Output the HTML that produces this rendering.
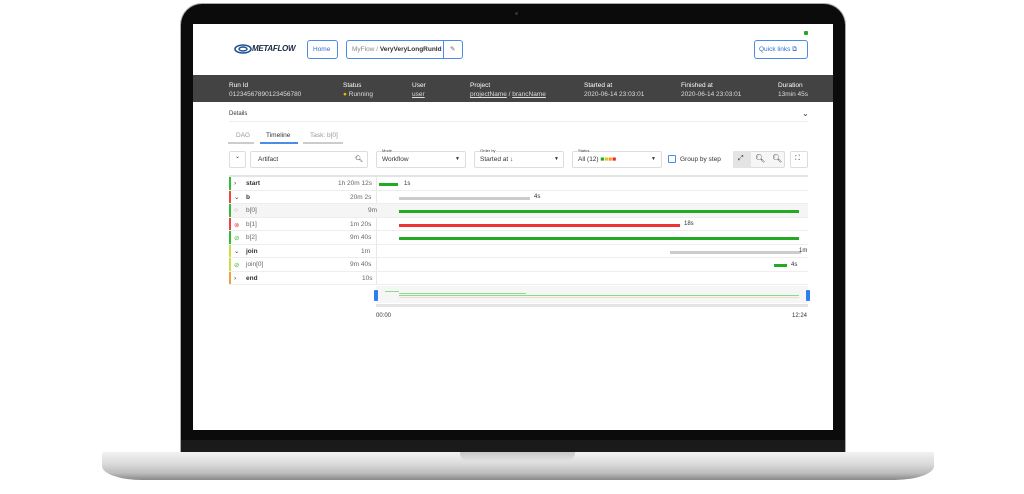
<!DOCTYPE html>
<html><head><meta charset="utf-8"><style>
*{margin:0;padding:0;box-sizing:border-box}
body{width:1024px;height:494px;background:#fff;position:relative;overflow:hidden;font-family:"Liberation Sans",sans-serif;color:#333}
.a{position:absolute}
.t{position:absolute;font-size:6.5px;white-space:nowrap}
.btn{position:absolute;border:1px solid #4a8ce8;border-radius:3px;background:#fff}
.row{position:absolute;left:229px;width:579px;height:13.5px;border-bottom:1px solid #eee}
.row .l{position:absolute;left:0;top:0;bottom:0;width:2px}
.bar{position:absolute;height:3px}
</style></head><body>
<!-- lid -->
<div class="a" style="left:180px;top:3px;width:666px;height:452px;background:#0b0b0b;border-radius:22px 22px 0 0;border:1px solid #aaa;border-bottom:none"></div>
<div class="a" style="left:515px;top:12px;width:3px;height:3px;border-radius:50%;background:#333"></div>
<div class="a" style="left:193px;top:24px;width:640px;height:406px;background:#fff"></div>
<div class="a" style="left:181px;top:440px;width:664px;height:12px;background:#1a1a1a"></div>
<!-- base -->
<div class="a" style="left:102px;top:452px;width:832px;height:28px;background:linear-gradient(#f2f2f2,#dcdcdc 40%,#bdbdbd 75%,#888);border-radius:2px 2px 40px 40px/2px 2px 14px 14px"></div>
<div class="a" style="left:460px;top:452px;width:115px;height:9px;background:linear-gradient(#c8c8c8,#e0e0e0);border-radius:0 0 8px 8px"></div>
<!-- header -->
<svg class="a" style="left:234px;top:44px" width="18" height="10" viewBox="0 0 18 10"><ellipse cx="9" cy="5" rx="8" ry="4" fill="none" stroke="#1f4f8f" stroke-width="1.6"/><ellipse cx="9" cy="5" rx="4" ry="2" fill="none" stroke="#1f4f8f" stroke-width="1.4"/></svg>
<div class="t" style="left:252px;top:44px;font-size:8px;font-weight:bold;font-style:italic;color:#1a2a44;letter-spacing:-0.3px">METAFLOW</div>
<div class="btn" style="left:307px;top:40px;width:31px;height:19px"></div>
<div class="t" style="left:313px;top:46px;color:#2f6fcf">Home</div>
<div class="btn" style="left:346px;top:40px;width:117px;height:19px"></div>
<div class="a" style="left:443px;top:40px;width:1px;height:19px;background:#4a8ce8"></div>
<div class="t" style="left:352px;top:46px;color:#888">MyFlow / <b style="color:#333">VeryVeryLongRunId</b></div>
<div class="t" style="left:450px;top:45px;color:#666">✎</div>
<div class="btn" style="left:754px;top:40px;width:54px;height:19px"></div>
<div class="t" style="left:759px;top:46px;color:#2f6fcf">Quick links ⧉</div>
<div class="a" style="left:804px;top:31px;width:4px;height:4px;background:#2a2;border-radius:1px"></div>
<!-- dark bar -->
<div class="a" style="left:193px;top:75px;width:640px;height:27px;background:#434343"></div>
<div class="t" style="left:229px;top:81px;color:#fff;line-height:9px">Run Id<br><span style="color:#ddd">01234567890123456780</span></div>
<div class="t" style="left:343px;top:81px;color:#fff;line-height:9px">Status<br><span style="color:#ddd"><span style="color:#f0b400">●</span> Running</span></div>
<div class="t" style="left:412px;top:81px;color:#fff;line-height:9px">User<br><u style="color:#ddd">user</u></div>
<div class="t" style="left:470px;top:81px;color:#fff;line-height:9px">Project<br><span style="color:#ddd"><u>projectName</u> / <u>brancName</u></span></div>
<div class="t" style="left:584px;top:81px;color:#fff;line-height:9px">Started at<br><span style="color:#ddd">2020-06-14 23:03:01</span></div>
<div class="t" style="left:681px;top:81px;color:#fff;line-height:9px">Finished at<br><span style="color:#ddd">2020-06-14 23:03:01</span></div>
<div class="t" style="left:778px;top:81px;color:#fff;line-height:9px">Duration<br><span style="color:#ddd">13min 45s</span></div>
<div class="t" style="left:229px;top:111px;font-size:6px">Details</div>
<div class="t" style="left:802px;top:109px;font-size:8px">⌄</div>
<div class="a" style="left:229px;top:121px;width:579px;height:1px;background:#eee"></div>
<!-- tabs -->
<div class="t" style="left:236px;top:132px;color:#999">DAG</div>
<div class="a" style="left:228px;top:142px;width:26px;height:1.5px;background:#ccc"></div>
<div class="t" style="left:266px;top:132px">Timeline</div>
<div class="a" style="left:260px;top:142px;width:38px;height:1.5px;background:#4a8ce8"></div>
<div class="t" style="left:310px;top:132px;color:#999">Task: b[0]</div>
<div class="a" style="left:303px;top:142px;width:40px;height:1.5px;background:#ccc"></div>
<!-- controls -->
<div class="a" style="left:229px;top:151px;width:17px;height:17px;border:1px solid #ddd;border-radius:2px"></div>
<div class="t" style="left:235px;top:153px;font-size:6px">⌄<br></div>
<div class="a" style="left:250px;top:151px;width:118px;height:17px;border:1px solid #ddd;border-radius:2px"></div>
<div class="t" style="left:258px;top:156px">Artifact</div><div class="t" style="left:355px;top:155px">🔍︎</div>
<div class="a" style="left:376px;top:151px;width:90px;height:17px;border:1px solid #ddd;border-radius:2px"></div>
<div class="t" style="left:382px;top:148px;font-size:4px;background:#fff">Mode</div>
<div class="t" style="left:382px;top:156px">Workflow</div><div class="t" style="left:455px;top:156px;font-size:5px">▼</div>
<div class="a" style="left:474px;top:151px;width:90px;height:17px;border:1px solid #ddd;border-radius:2px"></div>
<div class="t" style="left:480px;top:148px;font-size:4px;background:#fff">Order by</div>
<div class="t" style="left:480px;top:156px">Started at ↓</div><div class="t" style="left:554px;top:156px;font-size:5px">▼</div>
<div class="a" style="left:572px;top:151px;width:90px;height:17px;border:1px solid #ddd;border-radius:2px"></div>
<div class="t" style="left:578px;top:148px;font-size:4px;background:#fff">Status</div>
<div class="t" style="left:578px;top:156px">All (12) <span style="color:#2a2">■</span><span style="color:#cc2">■</span><span style="color:#f90">■</span><span style="color:#e22">■</span></div><div class="t" style="left:651px;top:156px;font-size:5px">▼</div>
<div class="a" style="left:668px;top:155px;width:8px;height:8px;border:1px solid #4a8ce8;border-radius:1px"></div>
<div class="t" style="left:680px;top:156px">Group by step</div>
<div class="a" style="left:733px;top:151px;width:52px;height:17px;border:1px solid #ddd;background:#f6f6f6;border-radius:2px"></div>
<div class="a" style="left:733px;top:151px;width:18px;height:17px;background:#e4e4e4"></div>
<div class="t" style="left:738px;top:155px;font-size:7px">⤢</div>
<div class="t" style="left:755px;top:154px;font-size:8px">🔍︎</div>
<div class="t" style="left:772px;top:154px;font-size:8px">🔍︎</div>
<div class="a" style="left:790px;top:151px;width:18px;height:17px;border:1px solid #ddd;border-radius:2px"></div>
<div class="t" style="left:795px;top:155px;font-size:7px">⛶</div>
<!-- table -->
<div class="a" style="left:229px;top:175px;width:579px;height:2px;background:#e4e4e4"></div>
<div class="a" style="left:376px;top:177px;width:1px;height:108px;background:#e8e8e8"></div>
<div class="row" style="top:177px"><div class="l" style="background:#3b3"></div><span class="t" style="left:5px;top:3px">›</span><b class="t" style="left:17px;top:3px">start</b><span class="t" style="left:109px;top:3px;color:#666">1h 20m 12s</span></div>
<div class="row" style="top:190.5px"><div class="l" style="background:#e44"></div><span class="t" style="left:5px;top:2px">⌄</span><b class="t" style="left:17px;top:3px">b</b><span class="t" style="left:121px;top:3px;color:#666">20m 2s</span></div>
<div class="row" style="top:204px;background:#f5f5f5"><div class="l" style="background:#3b3"></div><span class="t" style="left:5px;top:3px;color:#888">○</span><span class="t" style="left:17px;top:3px;color:#666">b[0]</span><span class="t" style="left:139px;top:3px;color:#666">9m</span></div>
<div class="row" style="top:217.5px"><div class="l" style="background:#e44"></div><span class="t" style="left:5px;top:3px;color:#e44">⊗</span><span class="t" style="left:17px;top:3px;color:#666">b[1]</span><span class="t" style="left:121px;top:3px;color:#666">1m 20s</span></div>
<div class="row" style="top:231px"><div class="l" style="background:#3b3"></div><span class="t" style="left:5px;top:3px;color:#3b3">⊘</span><span class="t" style="left:17px;top:3px;color:#666">b[2]</span><span class="t" style="left:121px;top:3px;color:#666">9m 40s</span></div>
<div class="row" style="top:244.5px"><div class="l" style="background:#cd4"></div><span class="t" style="left:5px;top:2px">⌄</span><b class="t" style="left:17px;top:3px">join</b><span class="t" style="left:132px;top:3px;color:#666">1m</span></div>
<div class="row" style="top:258px"><div class="l" style="background:#cd4"></div><span class="t" style="left:5px;top:3px;color:#3b3">⊘</span><span class="t" style="left:17px;top:3px;color:#666">join[0]</span><span class="t" style="left:121px;top:3px;color:#666">9m 40s</span></div>
<div class="row" style="top:271.5px"><div class="l" style="background:#f0a040"></div><span class="t" style="left:5px;top:3px">›</span><b class="t" style="left:17px;top:3px">end</b><span class="t" style="left:133px;top:3px;color:#666">10s</span></div>
<!-- bars -->
<div class="bar" style="left:379px;top:183px;width:19px;background:#2a2"></div><div class="t" style="left:404px;top:181px;font-size:6px">1s</div>
<div class="bar" style="left:399px;top:197px;width:131px;background:#ccc"></div><div class="t" style="left:534px;top:194px;font-size:6px">4s</div>
<div class="bar" style="left:399px;top:210px;width:400px;background:#2a2"></div>
<div class="bar" style="left:399px;top:224px;width:281px;background:#e33"></div><div class="t" style="left:684px;top:221px;font-size:6px">18s</div>
<div class="bar" style="left:399px;top:237px;width:400px;background:#2a2"></div>
<div class="bar" style="left:670px;top:251px;width:131px;background:#ccc"></div><div class="t" style="left:799px;top:248px;font-size:6px">1m</div>
<div class="bar" style="left:774px;top:264px;width:13px;background:#2a2"></div><div class="t" style="left:791px;top:262px;font-size:6px">4s</div>
<!-- minimap -->
<div class="a" style="left:376px;top:286px;width:432px;height:17px;background:#f6f6f6"></div>
<div class="a" style="left:374px;top:290px;width:4px;height:11px;background:#2f7fe8;border-radius:1px"></div>
<div class="a" style="left:806px;top:290px;width:4px;height:11px;background:#2f7fe8;border-radius:1px"></div>
<div class="a" style="left:385px;top:291px;width:14px;height:1px;background:#8d8"></div>
<div class="a" style="left:399px;top:293px;width:127px;height:1px;background:#8d8"></div>
<div class="a" style="left:399px;top:295px;width:400px;height:1px;background:#8d8"></div>
<div class="a" style="left:399px;top:297px;width:400px;height:1px;background:#edc"></div>
<div class="a" style="left:376px;top:304px;width:432px;height:3px;background:#e4e4e4"></div>
<div class="t" style="left:376px;top:313px;font-size:6px">00:00</div>
<div class="t" style="left:792px;top:313px;font-size:6px">12:24</div>
</body></html>
